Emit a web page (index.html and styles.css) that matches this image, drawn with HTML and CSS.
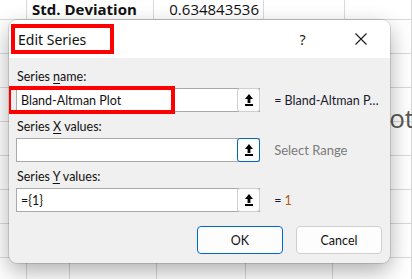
FILE: index.html
```html
<!DOCTYPE html>
<html>
<head>
    <title>Edit Series</title>
    <link rel="stylesheet" href="styles.css">
</head>
<body>
    <div class="sheet">
        <div class="sheet-top">
            <div class="cell"></div>
            <div class="cell cell-label">Std. Deviation</div>
            <div class="cell cell-num">0.634843536</div>
            <div class="cell"></div>
            <div class="cell"></div>
        </div>
        <div class="sheet-rows">
            <div class="cell"></div><div class="cell"></div><div class="cell"></div><div class="cell"></div><div class="cell"></div><div class="cell"></div>
            <div class="cell"></div><div class="cell"></div><div class="cell"></div><div class="cell"></div><div class="cell"></div><div class="cell"></div>
            <div class="cell"></div><div class="cell"></div><div class="cell"></div><div class="cell"></div><div class="cell"></div><div class="cell"></div>
            <div class="cell"></div><div class="cell"></div><div class="cell"></div><div class="cell"></div><div class="cell"></div><div class="cell"></div>
            <div class="cell"></div><div class="cell"></div><div class="cell"></div><div class="cell"></div><div class="cell"></div><div class="cell"></div>
            <div class="cell"></div><div class="cell"></div><div class="cell"></div><div class="cell"></div><div class="cell"></div><div class="cell"></div>
            <div class="cell"></div><div class="cell"></div><div class="cell"></div><div class="cell"></div><div class="cell"></div><div class="cell"></div>
            <div class="cell"></div><div class="cell"></div><div class="cell"></div><div class="cell"></div><div class="cell"></div><div class="cell"></div>
        </div>
        <div class="chart-title">Plot</div>
    </div>

    <div class="dialog">
        <div class="titlebar">
            <span class="title">Edit Series</span>
            <span class="title-btn help">?</span>
            <span class="title-btn close">
                <svg width="12" height="12" viewBox="0 0 12 12"><path d="M0.5 0.5 L11.5 11.5 M11.5 0.5 L0.5 11.5" stroke="#1a1a1a" stroke-width="1.1" fill="none"/></svg>
            </span>
        </div>

        <div class="dialog-body">
            <div class="field">
                <div class="field-label">Series <u>n</u>ame:</div>
                <div class="field-row">
                    <div class="ref-input">
                        <span class="ref-text">Bland-Altman Plot</span>
                        <span class="ref-btn">
                            <svg width="8" height="12" viewBox="0 0 8 12"><path d="M4 0 L8 5 H5.4 V9 H2.6 V5 H0 Z" fill="#000"/><rect x="0" y="10" width="8" height="2" fill="#000"/></svg>
                        </span>
                    </div>
                    <span class="side-text">= Bland-Altman P…</span>
                </div>
            </div>

            <div class="field">
                <div class="field-label">Series <u>X</u> values:</div>
                <div class="field-row">
                    <div class="ref-input">
                        <span class="ref-text"></span>
                        <span class="ref-btn focused">
                            <svg width="8" height="12" viewBox="0 0 8 12"><path d="M4 0 L8 5 H5.4 V9 H2.6 V5 H0 Z" fill="#000"/><rect x="0" y="10" width="8" height="2" fill="#000"/></svg>
                        </span>
                    </div>
                    <span class="side-text muted">Select Range</span>
                </div>
            </div>

            <div class="field">
                <div class="field-label">Series <u>Y</u> values:</div>
                <div class="field-row">
                    <div class="ref-input">
                        <span class="ref-text">={1}</span>
                        <span class="ref-btn">
                            <svg width="8" height="12" viewBox="0 0 8 12"><path d="M4 0 L8 5 H5.4 V9 H2.6 V5 H0 Z" fill="#000"/><rect x="0" y="10" width="8" height="2" fill="#000"/></svg>
                        </span>
                    </div>
                    <span class="side-text">= <span class="value">1</span></span>
                </div>
            </div>

            <div class="actions">
                <button class="btn btn-default">OK</button>
                <button class="btn">Cancel</button>
            </div>
        </div>

        <div class="mark mark-title"></div>
        <div class="mark mark-name"></div>
    </div>
</body>
</html>
```

FILE: styles.css
```css
body {
    margin: 0;
    background: #fff;
    font-family: Lato, "Noto Sans", sans-serif;
    overflow: hidden;
}

/* spreadsheet behind the dialog */
.sheet {
    position: relative;
    width: 412px;
    height: 279px;
    overflow: hidden;
}

.sheet-top {
    display: grid;
    grid-template-columns: 27px 127px 110px 81px 1fr;
    height: 20px;
}

.sheet-rows {
    display: grid;
    grid-template-columns: 27px 43px 87px 89px 87px 1fr;
    grid-auto-rows: 34px;
}

.cell {
    border-right: 1px solid #d9d9d9;
    border-bottom: 1px solid #d9d9d9;
    overflow: hidden;
    white-space: nowrap;
}

.cell-label {
    font-family: "Open Sans", sans-serif;
    font-weight: bold;
    font-size: 15px;
    line-height: 18px;
    padding-left: 5px;
    color: #111;
}

.cell-num {
    font-family: "Open Sans", sans-serif;
    font-size: 15px;
    line-height: 18px;
    text-align: right;
    padding-right: 4px;
    color: #111;
}

.chart-title {
    position: absolute;
    left: 367px;
    top: 100px;
    font-family: "Open Sans", sans-serif;
    font-size: 26px;
    color: #595959;
}

/* dialog window */
.dialog {
    position: absolute;
    left: 9px;
    top: 20px;
    width: 381px;
    height: 243px;
    border-radius: 8px;
    overflow: hidden;
    background: #f0f0f0;
    box-shadow: 0 0 0 1px rgba(0, 0, 0, 0.12), 0 8px 22px rgba(0, 0, 0, 0.32);
}

.titlebar {
    display: flex;
    align-items: center;
    height: 38px;
    background: #fff;
    padding-left: 9px;
}

.title {
    flex: 1;
    font-family: "Noto Sans", sans-serif;
    font-size: 14px;
    color: #111;
}

.title-btn {
    display: flex;
    align-items: center;
    justify-content: center;
    width: 57px;
    height: 38px;
    font-family: "Noto Sans", sans-serif;
    font-size: 14px;
    color: #1a1a1a;
}

.help {
    margin-right: 1px;
}

.close {
    margin-right: 1px;
}

.dialog-body {
    display: flex;
    flex-direction: column;
    gap: 7px;
    padding: 11px 8px 10px 7px;
    font-size: 12.5px;
    color: #111;
}

.field-label {
    height: 16px;
    line-height: 16px;
    padding-left: 1px;
    margin-bottom: 3px;
}

.field-label u {
    text-underline-offset: 2px;
}

.field-row {
    display: flex;
    align-items: center;
}

.ref-input {
    display: flex;
    align-items: center;
    box-sizing: border-box;
    width: 249px;
    height: 24px;
    background: #fff;
    border: 1px solid #a9a9a9;
}

.ref-text {
    flex: 1;
    padding-left: 4px;
    font-size: 12.5px;
}

.ref-btn {
    display: flex;
    align-items: center;
    justify-content: center;
    box-sizing: border-box;
    width: 23px;
    height: 24px;
    margin-right: -1px;
    border: 1px solid #cfcfcf;
    border-radius: 3px;
    background: #fdfdfd;
}

.ref-btn.focused {
    border: 1.5px solid #0067c0;
}

.side-text {
    width: 110px;
    margin-left: 14px;
    white-space: nowrap;
    font-size: 12.5px;
    color: #1a1a2e;
}

.side-text.muted {
    color: #7a7a7a;
    font-size: 13px;
}

.value {
    color: #b25a0c;
}

.actions {
    display: flex;
    justify-content: flex-end;
    gap: 13px;
    margin-top: 7px;
}

.btn {
    width: 86px;
    height: 28px;
    border: 1px solid #d0d0d0;
    border-radius: 4px;
    background: #fdfdfd;
    font-family: Lato, "Noto Sans", sans-serif;
    font-size: 12.5px;
    color: #111;
}

.btn-default {
    border-color: #0067c0;
}

/* red annotation boxes */
.mark {
    position: absolute;
    border: 4px solid #f00;
    box-sizing: border-box;
}

.mark-title {
    left: 2px;
    top: 4px;
    width: 103px;
    height: 30px;
}

.mark-name {
    left: -2px;
    top: 66px;
    width: 168px;
    height: 28px;
}
```
